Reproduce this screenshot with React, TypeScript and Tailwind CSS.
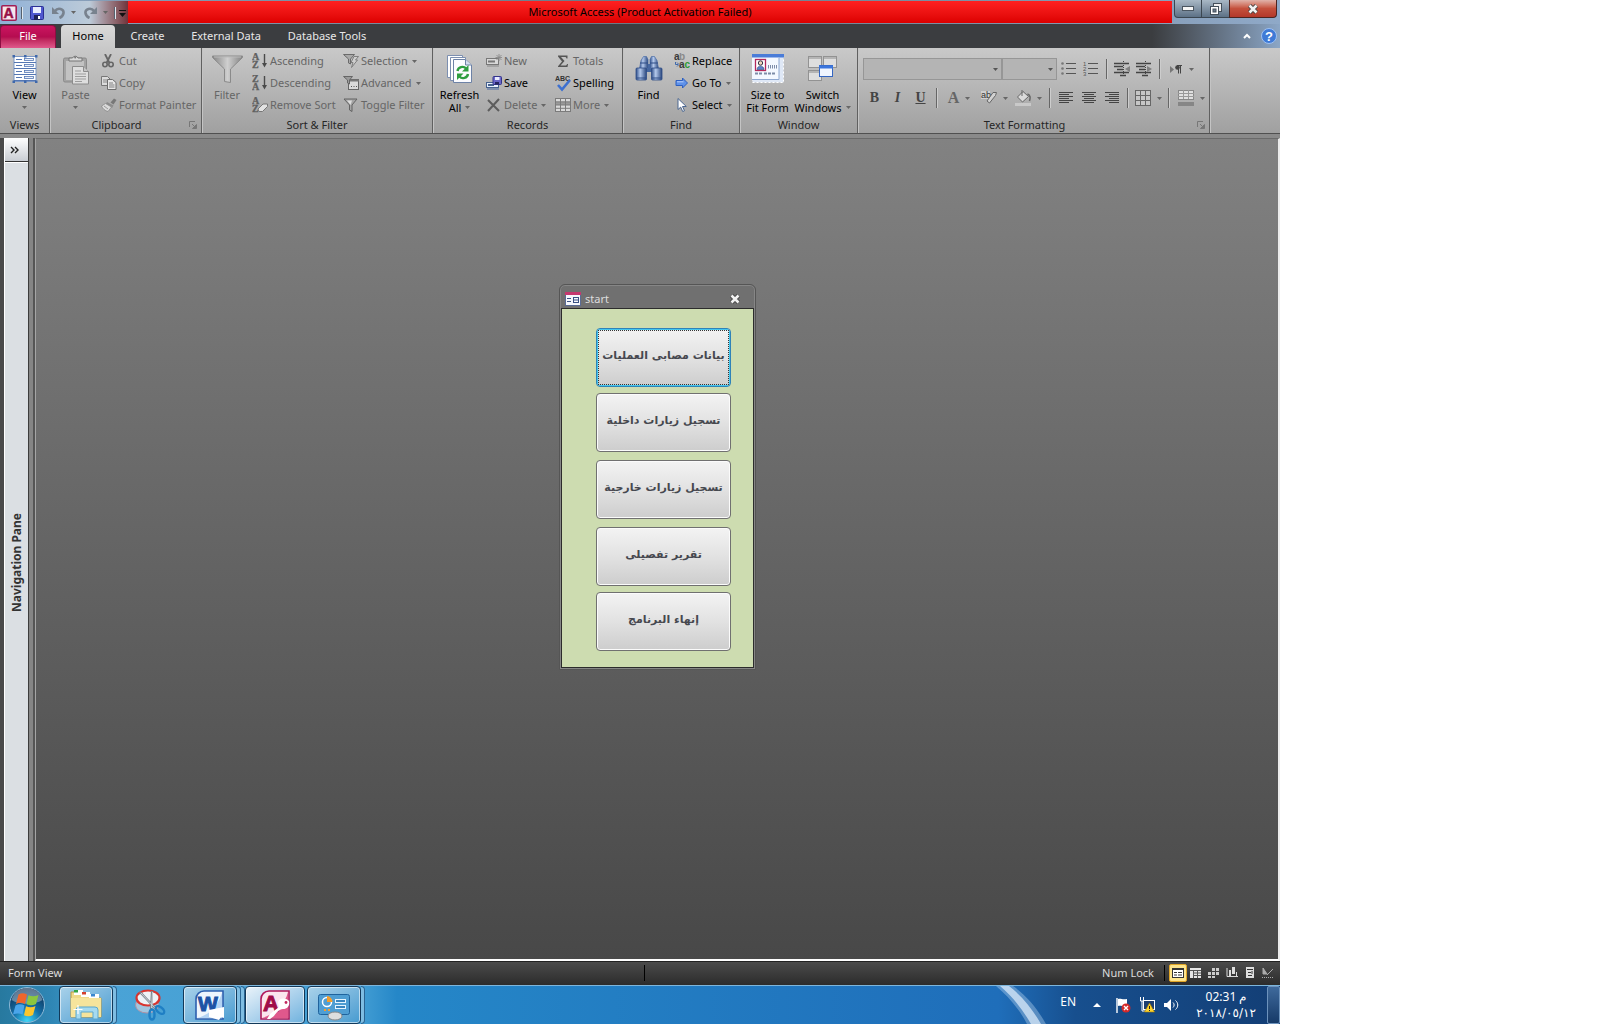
import React from "react";

type P = { children?: React.ReactNode };

const Caret = ({ c = "#666" }: { c?: string }) => (
  <svg width="5" height="3" viewBox="0 0 5 3" className="shrink-0" aria-hidden="true">
    <path d="M0 0h5L2.5 3z" fill={c} />
  </svg>
);

function Icon({ w = 16, h = 16, children }: P & { w?: number; h?: number }) {
  return (
    <svg width={w} height={h} viewBox={`0 0 ${w} ${h}`} className="shrink-0" aria-hidden="true">
      {children}
    </svg>
  );
}

/* ---------- ribbon icons ---------- */

const ViewIcon = () => (
  <Icon w={26} h={28}>
    <rect x="2" y="1.5" width="22" height="25" fill="#fff" stroke="#7b97c5" />
    {[2, 8, 14, 20].map((y) => (
      <g key={y}>
        <path d={`M2 ${y + 5.5}h22`} stroke="#5577b3" />
        <path d={`M4 ${y + 2.5}h6`} stroke="#5577b3" />
        <rect x="12.5" y={y + 1.5} width="9" height="2" fill="#e8eef8" stroke="#5577b3" strokeWidth=".8" />
      </g>
    ))}
    {[0.5, 12, 23].map((x) => (
      <g key={x} fill="#3f68ab">
        <rect x={x} y="0" width="2.5" height="2.5" />
        <rect x={x} y="25.5" width="2.5" height="2.5" />
      </g>
    ))}
  </Icon>
);

const PasteIcon = () => (
  <Icon w={28} h={31}>
    <rect x="1.5" y="4" width="23" height="24" rx="1.5" fill="#a3a3a3" stroke="#8a8a8a" />
    <rect x="4" y="7" width="18" height="19" fill="#c2c2c2" />
    <path d="M7 7V4h3.500a3 3 0 0 1 5.500 0H20v3z" fill="#d8d8d8" stroke="#777" />
    <circle cx="13.200" cy="3.500" r="1" fill="#777" />
    <path d="M10.500 12.500h11l5 5v12.500h-16z" fill="#dedede" stroke="#8c8c8c" />
    <path d="M21.500 12.500v5h5" fill="#c4c4c4" stroke="#8c8c8c" />
    <path d="M13 17h6M13 20h11M13 22.500h11M13 25h11M13 27.500h7" stroke="#9d9d9d" />
  </Icon>
);

const CutIcon = () => (
  <Icon w={14} h={14}>
    <path d="M4 0l4.500 9M10 0L5.500 9" stroke="#666" strokeWidth="1.800" />
    <circle cx="4" cy="10.500" r="2.200" fill="none" stroke="#666" strokeWidth="1.600" />
    <circle cx="10" cy="10.500" r="2.200" fill="none" stroke="#666" strokeWidth="1.600" />
  </Icon>
);

const CopyIcon = () => (
  <Icon w={16} h={14}>
    <path d="M.5.500h6l3 3v6h-9z" fill="#dcdcdc" stroke="#777" />
    <path d="M2 4h4M2 6h4" stroke="#888" />
    <path d="M6.500 3.500h5l3.500 3v7H6.500z" fill="#e6e6e6" stroke="#6d6d6d" />
    <path d="M8 7h4M8 9h5.500M8 11h5.500" stroke="#808080" />
  </Icon>
);

const PainterIcon = () => (
  <Icon w={16} h={14}>
    <path d="M9.500 4.500L13 .5l2.500 1.500-3 4.500z" fill="#777" />
    <path d="M6 4l6.500 3.500-1.500 2.500-6.500-3.500z" fill="#8b8b8b" />
    <path d="M4.500 5.500l6 3.500-3.500 4.500C4 13 1.500 10.500.500 8z" fill="#dadada" stroke="#8a8a8a" strokeWidth=".8" />
    <path d="M3 8l4 3" stroke="#999" />
  </Icon>
);

const FilterIcon = () => (
  <Icon w={31} h={28}>
    <defs>
      <linearGradient id="funnel" x1="0" x2="1">
        <stop offset="0" stopColor="#858585" />
        <stop offset=".5" stopColor="#cfcfcf" />
        <stop offset="1" stopColor="#858585" />
      </linearGradient>
    </defs>
    <path d="M.5 1h30v1.500L18.500 14v13.500l-6-1V14L.500 2.500z" fill="url(#funnel)" stroke="#8a8a8a" />
    <path d="M2 2h27" stroke="#bbb" />
  </Icon>
);

const SortLetters = ({ a, b }: { a: string; b: string }) => (
  <g fill="#606060" stroke="#606060" strokeWidth=".3" fontFamily="Liberation Serif, serif" fontWeight="700" fontSize="10">
    <text x="0" y="7">{a}</text>
    <text x="0" y="15">{b}</text>
  </g>
);
const SortIcon = ({ a, b }: { a: string; b: string }) => (
  <Icon>
    <SortLetters a={a} b={b} />
    <path d="M12.500 1v10" stroke="#4a4a4a" strokeWidth="1.400" />
    <path d="M10 10h5l-2.500 4.500z" fill="#4a4a4a" />
  </Icon>
);
const RemoveSortIcon = () => (
  <Icon>
    <SortLetters a="A" b="Z" />
    <path d="M6 12l5-5 4.500 0v2.500l-5 5H7z" fill="#e2e2e2" stroke="#777" />
  </Icon>
);
const SmallFunnel = () => (
  <Icon>
    <path d="M1 2h13L9 8v6.500L6.500 13V8z" fill="#a4a4a4" stroke="#636363" />
    <path d="M4 3.500h5L7.500 8z" fill="#ddd" />
  </Icon>
);
const SelectionIcon = () => (
  <Icon>
    <path d="M.5 1.500h11L7.500 6v5l-2-1V6z" fill="#a9a9a9" stroke="#6a6a6a" />
    <path d="M11 3.500h4.500l-3 3.500h2l-6 7.500 1.500-5H8z" fill="#cfcfcf" stroke="#777" strokeWidth=".9" />
  </Icon>
);
const AdvancedIcon = () => (
  <Icon>
    <rect x="5.500" y="4.500" width="10" height="10" fill="#dadada" stroke="#666" />
    <path d="M5 5.500h11" stroke="#777" strokeWidth="2" />
    <path d="M.5 1.500h9L6.500 5v4l-2-1V5z" fill="#9b9b9b" stroke="#666" />
    <path d="M8 11.500h1M10.500 11.500h1M13 11.500h1" stroke="#555" />
  </Icon>
);

const RefreshIcon = () => (
  <Icon w={28} h={30}>
    <path d="M1.500 1.500h15v22h-15z" fill="#fff" stroke="#7c8fb0" />
    <path d="M4.500 3.500h15v23h-15z" fill="#fff" stroke="#7c8fb0" />
    <path d="M7.500 5.500h12l6 5.500v17.500h-18z" fill="#fbfcff" stroke="#6d82a6" />
    <path d="M19.500 5.500V11h6" fill="#d5dff0" stroke="#6d82a6" />
    <path d="M11.500 17c.5-4 6-5.500 8.500-2.500" fill="none" stroke="#2f9e41" strokeWidth="2.400" />
    <path d="M22.500 11v6.500H16z" fill="#2f9e41" />
    <path d="M22 20c-.5 4-6 5.500-8.500 2.500" fill="none" stroke="#2f9e41" strokeWidth="2.400" />
    <path d="M11 26v-6.500h6.500z" fill="#2f9e41" />
  </Icon>
);
const NewIcon = () => (
  <Icon>
    <rect x=".5" y="5.500" width="12" height="6" fill="#d8d8d8" stroke="#777" />
    <path d="M2 8.500h7" stroke="#777" strokeWidth="2" />
    <path d="M1 13h12" stroke="#888" />
    <path d="M13 1v7M9.500 4.500h6.500M10.500 2l5 5M15.500 2l-5 5" stroke="#8b8b8b" strokeWidth=".9" />
  </Icon>
);
const SaveRecIcon = () => (
  <Icon>
    <rect x=".5" y="7.500" width="12" height="5" fill="#e8effc" stroke="#46628f" />
    <path d="M2 10h6" stroke="#46628f" strokeWidth="2" />
    <path d="M1 14h12" stroke="#4a69a3" />
    <rect x="7" y="1.500" width="8.500" height="8" rx="1" fill="#6b67c9" stroke="#34348a" />
    <rect x="9" y="2" width="4.500" height="3" fill="#e9ebff" />
    <rect x="9" y="7" width="4" height="2.500" fill="#25255f" />
  </Icon>
);
const DeleteIcon = () => (
  <Icon>
    <path d="M2 3l11 11M13 2L2 14" stroke="#5d5d5d" strokeWidth="2" fill="none" />
  </Icon>
);
const SigmaIcon = () => (
  <Icon>
    <path d="M3 2.500h9.500v3h-1c-.3-1.200-.8-1.500-2-1.500H6l3.500 4L5.500 12.500h4.500c1.200 0 1.700-.5 2-1.500h1l-.5 3H3v-.8L7 8.500 3 3.500z" fill="#555" />
  </Icon>
);
const SpellIcon = () => (
  <Icon w={16} h={17}>
    <text x="0" y="6" fontFamily="Liberation Sans, sans-serif" fontWeight="700" fontSize="7" fill="#333">ABC</text>
    <path d="M3 10l4 4.500L15 5" fill="none" stroke="#3d70d0" strokeWidth="2.600" />
  </Icon>
);
const MoreIcon = () => (
  <Icon>
    <rect x=".5" y="1.500" width="15" height="13" fill="#d9d9d9" stroke="#7b7b7b" />
    <rect x="1" y="5" width="14" height="3" fill="#999" />
    <path d="M0 4.800h16M0 8h16M0 11.300h16M5.500 1v14M10.500 1v14" stroke="#7b7b7b" />
  </Icon>
);

const FindIcon = () => (
  <Icon w={28} h={28}>
    <defs>
      <linearGradient id="barrel" x1="0" x2="1">
        <stop offset="0" stopColor="#2f4f8a" />
        <stop offset=".4" stopColor="#b4c9ec" />
        <stop offset="1" stopColor="#29467d" />
      </linearGradient>
    </defs>
    <rect x="11" y="9" width="6" height="8" fill="#45669f" />
    <path d="M8.500 1.500h3l1.500 3v9H4.500l1.500-8z" fill="url(#barrel)" stroke="#4b6da8" strokeWidth=".7" />
    <path d="M16.500 1.500h3l2.500 4 1.500 8H15v-9z" fill="url(#barrel)" stroke="#4b6da8" strokeWidth=".7" />
    <rect x="1" y="13" width="10.500" height="12" rx="1" fill="url(#barrel)" stroke="#2f4d86" strokeWidth=".8" />
    <rect x="16.500" y="13" width="10.500" height="12" rx="1" fill="url(#barrel)" stroke="#2f4d86" strokeWidth=".8" />
    <path d="M1.500 23h9.500M17 23h9.500M5 8h8M15 8h8" stroke="#2f4d86" />
  </Icon>
);
const ReplaceIcon = () => (
  <Icon>
    <g fontFamily="Liberation Sans, sans-serif" fontWeight="700" fontSize="10">
      <text x="0" y="7" fill="#3a3a3a">a</text>
      <text x="5" y="7" fill="#8a8a8a">b</text>
      <text x="5" y="15" fill="#3a3a3a">a</text>
      <text x="10.500" y="15" fill="#2c9b32">c</text>
    </g>
    <path d="M1.500 9v2.500H4M3 9.500l2 2-2 2" fill="none" stroke="#3f68ab" />
  </Icon>
);
const GoIcon = () => (
  <Icon>
    <path d="M2 5.500h6.500V3l5 5-5 5v-2.500H2z" fill="#5f92ea" stroke="#2d5fc0" />
    <path d="M3 6.800h6.500" stroke="#b9d1fb" />
  </Icon>
);
const CursorIcon = () => (
  <Icon>
    <path d="M4 1.500v11l2.700-2.400 2 4.400 1.800-.8-2-4.200h3.800z" fill="#fff" stroke="#4a6690" />
  </Icon>
);
const SizeIcon = () => (
  <Icon w={32} h={30}>
    <rect x=".5" y=".5" width="31" height="28" fill="#dfe8f6" stroke="#fff" strokeDasharray="2 2" />
    <rect x="0" y="0" width="27" height="25" fill="#f4f8ff" />
    <rect x="0" y="0" width="32" height="3.500" fill="#4a7cd8" />
    <rect x="3.500" y="5.500" width="10" height="11" fill="#fff" stroke="#b3285b" strokeWidth="1.300" />
    <circle cx="8.500" cy="9" r="2.200" fill="#f0d4bc" stroke="#334" />
    <path d="M5 15.500c0-4.500 7-4.500 7 0z" fill="#5b82c9" stroke="#334a7a" strokeWidth=".6" />
    <path d="M16.500 11v3.500M18.500 11v3.500M20.500 11v3.500M22.500 11v3.500M24.500 11v3.500" stroke="#7d8ca8" />
    <path d="M3 19.500h7M12 19.500h12" stroke="#7d8ca8" strokeWidth="2" strokeDasharray="3 1" />
    <path d="M27 4v21.500H0" fill="none" stroke="#8fa8d0" />
  </Icon>
);
const SwitchIcon = () => (
  <Icon w={30} h={28}>
    <g fill="#dedede" stroke="#929292">
      <rect x=".5" y="1.500" width="13" height="11" />
      <rect x="15.500" y="1.500" width="13" height="11" />
      <rect x=".5" y="15.500" width="13" height="10" />
    </g>
    <path d="M1 3h12M16 3h12M1 17h12" stroke="#b5b5b5" strokeWidth="2" />
    <rect x="11.500" y="10.500" width="13" height="11" fill="#f1f6ff" stroke="#3566c1" />
    <path d="M11 12h14" stroke="#3c76dd" strokeWidth="3" />
  </Icon>
);

const ListIcon = ({ numbered = false }: { numbered?: boolean }) => (
  <Icon>
    {[3, 8, 13].map((y, i) => (
      <g key={y}>
        <path d={`M5 ${y - 0.5}h10`} stroke="#555" />
        {numbered ? (
          <text x="0" y={y + 2} fontSize="6" fontFamily="Liberation Sans, sans-serif" fill="#555">{i + 1}</text>
        ) : (
          <circle cx="1.500" cy={y - 0.5} r="1.300" fill="#777" />
        )}
      </g>
    ))}
  </Icon>
);
const IndentIcon = ({ out = false }: { out?: boolean }) => (
  <Icon>
    <path d="M0 2.500h15M0 5.500h9M3 8.500h6M0 11.500h15M6 14.500h6" stroke="#444" strokeWidth="1.300" />
    <path d="M9.500 0v16" stroke="#444" strokeDasharray="1 1" />
    <path d={out ? "M16 5v6l-5-3z" : "M11 5v6l5-3z"} fill="#808080" />
  </Icon>
);
const ParaIcon = () => (
  <Icon w={14}>
    <path d="M1 5v7l4-3.500z" fill="#777" />
    <path d="M9.500 4.500v8M11.500 4.500v8M8 4.500h5" stroke="#444" />
    <circle cx="8.500" cy="6.500" r="2.300" fill="#444" />
  </Icon>
);
const AlignIcon = ({ k }: { k: "l" | "c" | "r" }) => {
  const x = k === "l" ? 0 : k === "c" ? 2 : 4;
  return (
    <Icon w={14} h={12}>
      <path d={`M0 .5h14M${x} 2.500h10M0 4.500h14M${x} 6.500h10M0 8.500h14M${x} 10.500h10`} stroke="#444" />
    </Icon>
  );
};
const GridIcon = () => (
  <Icon>
    <rect x=".5" y=".5" width="15" height="15" fill="#c6c6c6" stroke="#666" />
    <path d="M5.500 0v16M10.500 0v16M0 5.500h16M0 10.500h16" stroke="#666" />
  </Icon>
);
const AltIcon = () => (
  <Icon>
    <rect x=".5" y=".5" width="15" height="9" fill="#e0e0e0" stroke="#888" />
    <path d="M5.500 0v9M10.500 0v9M0 3.500h16M0 6.500h16" stroke="#999" />
    <rect x="0" y="12" width="16" height="4" fill="#868686" />
  </Icon>
);
const HighlightIcon = () => (
  <Icon>
    <rect x="0" y="1" width="9" height="8" fill="#cfcfcf" />
    <text x="0" y="8" fontSize="9" fontFamily="Liberation Sans, sans-serif" fill="#333">ab</text>
    <path d="M6 11l6-8.500 3.500 0-1 3L8.500 13z" fill="#d2d2d2" stroke="#666" />
  </Icon>
);
const BucketIcon = () => (
  <Icon>
    <path d="M2.500 7L8 1.500l5.500 5-6 5.500z" fill="#dadada" stroke="#666" />
    <path d="M7 0v6" stroke="#666" />
    <path d="M12.500 4c3 1 3 4 2 7" stroke="#666" strokeWidth="1.500" fill="none" />
    <rect x="0" y="13" width="16" height="3" fill="#c9c9c9" />
  </Icon>
);
const Launcher = () => (
  <Icon w={8} h={8}>
    <path d="M.5 6V.5H6" fill="none" stroke="#777" />
    <path d="M3 3l3 3M7.500 3.500v4h-4z" stroke="#777" fill="#777" />
  </Icon>
);

/* ---------- ribbon layout ---------- */

function Group({ label, width, launcher, children }: P & { label: string; width: string; launcher?: boolean }) {
  return (
    <section
      aria-label={label}
      className={`${width} flex shrink-0 flex-col border-r border-[#606060] pt-0.5 shadow-[1px_0_0_#c4c4c4]`}
    >
      <div className="flex h-[67px]">{children}</div>
      <div className="flex items-center leading-4 text-[#262626]">
        <span className="flex-1 text-center">{label}</span>
        {launcher && (
          <button aria-label={`${label} options`} className="w-[18px] pl-1.5">
            <Launcher />
          </button>
        )}
      </div>
    </section>
  );
}

function Big({ icon, l1, l2, caret, dim, width }: { icon: React.ReactNode; l1: string; l2?: string; caret?: boolean; dim?: boolean; width: string }) {
  return (
    <button
      className={`${width} flex shrink-0 flex-col items-center whitespace-nowrap leading-[13px] ${dim ? "text-[#666]" : "text-black"}`}
    >
      <span className="flex h-[38px] items-center">{icon}</span>
      <span>{l1}</span>
      <span className="flex h-[13px] items-center gap-1">
        {l2}
        {caret && <Caret />}
      </span>
    </button>
  );
}

function Small({ icon, label, caret, dim }: { icon: React.ReactNode; label: string; caret?: boolean; dim?: boolean }) {
  return (
    <button className={`flex h-[22px] items-center whitespace-nowrap ${dim ? "text-[#666]" : "text-black"}`}>
      <span className="flex w-[18px] justify-start">{icon}</span>
      <span>{label}</span>
      {caret && (
        <span className="pl-1">
          <Caret />
        </span>
      )}
    </button>
  );
}

const Col = ({ width, children }: P & { width: string }) => (
  <div className={`${width} flex shrink-0 flex-col items-start`}>{children}</div>
);

const Sep = () => (
  <span className="px-1">
    <span className="block h-5 w-px bg-[#666] shadow-[1px_0_0_#cdcdcd]" />
  </span>
);

const Tool = ({ label, width, caret, children }: P & { label: string; width: string; caret?: boolean }) => (
  <button aria-label={label} className={`${width} flex h-5 shrink-0 items-center justify-center ${caret ? "gap-1.5" : ""}`}>
    {children}
    {caret && <Caret />}
  </button>
);

function Combo({ label, width }: { label: string; width: string }) {
  return (
    <div className={`${width} relative h-[22px]`}>
      <select aria-label={label} className="h-full w-full appearance-none border border-[#969696] bg-[#b4b4b4]">
        <option></option>
      </select>
      <span className="pointer-events-none absolute inset-y-0 right-1 flex items-center">
        <Caret c="#555" />
      </span>
    </div>
  );
}

function Ribbon() {
  return (
    <div className="flex h-[86px] border-b border-[#505050] bg-linear-to-b from-[#c9c9c9] to-[#a0a0a0]">
      <Group label="Views" width="w-[50px]">
        <Big icon={<ViewIcon />} l1="View" caret width="w-[49px]" />
      </Group>
      <Group label="Clipboard" width="w-[152px]" launcher>
        <Big icon={<PasteIcon />} l1="Paste" caret dim width="w-[51px]" />
        <Col width="w-[98px]">
          <Small icon={<CutIcon />} label="Cut" dim />
          <Small icon={<CopyIcon />} label="Copy" dim />
          <Small icon={<PainterIcon />} label="Format Painter" dim />
        </Col>
      </Group>
      <Group label="Sort & Filter" width="w-[231px]">
        <Big icon={<FilterIcon />} l1="Filter" dim width="w-[50px]" />
        <Col width="w-[91px]">
          <Small icon={<SortIcon a="A" b="Z" />} label="Ascending" dim />
          <Small icon={<SortIcon a="Z" b="A" />} label="Descending" dim />
          <Small icon={<RemoveSortIcon />} label="Remove Sort" dim />
        </Col>
        <Col width="w-[88px]">
          <Small icon={<SelectionIcon />} label="Selection" caret dim />
          <Small icon={<AdvancedIcon />} label="Advanced" caret dim />
          <Small icon={<SmallFunnel />} label="Toggle Filter" dim />
        </Col>
      </Group>
      <Group label="Records" width="w-[190px]">
        <Big icon={<RefreshIcon />} l1="Refresh" l2="All" caret width="w-[53px]" />
        <Col width="w-[69px]">
          <Small icon={<NewIcon />} label="New" dim />
          <Small icon={<SaveRecIcon />} label="Save" />
          <Small icon={<DeleteIcon />} label="Delete" caret dim />
        </Col>
        <Col width="w-[66px]">
          <Small icon={<SigmaIcon />} label="Totals" dim />
          <Small icon={<SpellIcon />} label="Spelling" />
          <Small icon={<MoreIcon />} label="More" caret dim />
        </Col>
      </Group>
      <Group label="Find" width="w-[117px]">
        <Big icon={<FindIcon />} l1="Find" width="w-[51px]" />
        <Col width="w-[64px]">
          <Small icon={<ReplaceIcon />} label="Replace" />
          <Small icon={<GoIcon />} label="Go To" caret />
          <Small icon={<CursorIcon />} label="Select" caret />
        </Col>
      </Group>
      <Group label="Window" width="w-[118px]">
        <Big icon={<SizeIcon />} l1="Size to" l2="Fit Form" width="w-[55px]" />
        <Big icon={<SwitchIcon />} l1="Switch" l2="Windows" caret width="w-[55px]" />
      </Group>
      <Group label="Text Formatting" width="w-[352px]" launcher>
        <div className="flex flex-col gap-2 pl-[5px] pt-2">
          <div className="flex h-[22px] items-center">
            <Combo label="Font" width="w-[139px]" />
            <Combo label="Font size" width="w-[55px]" />
            <Tool label="Bullets" width="w-[23px]"><ListIcon /></Tool>
            <Tool label="Numbering" width="w-[22px]"><ListIcon numbered /></Tool>
            <Sep />
            <Tool label="Decrease indent" width="w-[22px]"><IndentIcon out /></Tool>
            <Tool label="Increase indent" width="w-[22px]"><IndentIcon /></Tool>
            <Sep />
            <Tool label="Text direction" width="w-[34px]" caret><ParaIcon /></Tool>
          </div>
          <div className="flex h-5 items-center font-['Liberation_Serif',serif] text-[#444]">
            <Tool label="Bold" width="w-[23px]"><b className="text-sm">B</b></Tool>
            <Tool label="Italic" width="w-[23px]"><b className="text-sm italic">I</b></Tool>
            <Tool label="Underline" width="w-[23px]"><b className="text-sm underline">U</b></Tool>
            <Sep />
            <Tool label="Font color" width="w-[36px]" caret><b className="text-base text-[#666]">A</b></Tool>
            <Tool label="Highlight" width="w-[34px]" caret><HighlightIcon /></Tool>
            <Tool label="Background color" width="w-[34px]" caret><BucketIcon /></Tool>
            <Sep />
            <Tool label="Align left" width="w-[23px]"><AlignIcon k="l" /></Tool>
            <Tool label="Center" width="w-[23px]"><AlignIcon k="c" /></Tool>
            <Tool label="Align right" width="w-[23px]"><AlignIcon k="r" /></Tool>
            <Sep />
            <Tool label="Gridlines" width="w-[32px]" caret><GridIcon /></Tool>
            <Sep />
            <Tool label="Alternate row color" width="w-[36px]" caret><AltIcon /></Tool>
          </div>
        </div>
      </Group>
    </div>
  );
}

/* ---------- title bar and tabs ---------- */

const XMark = () => (
  <Icon w={12} h={10}>
    <path d="M2.500 1.500l7 7M9.500 1.500l-7 7" stroke="#444" strokeWidth="4.400" />
    <path d="M2.500 1.500l7 7M9.500 1.500l-7 7" stroke="#f2f2f2" strokeWidth="2.600" />
  </Icon>
);

function TitleBar() {
  return (
    <header className="flex h-6 bg-linear-to-r from-[#8ba5c2] via-[#6c7783] to-[#8fa9c8] pt-px">
      <div className="flex h-full w-[128px] shrink-0 items-center bg-linear-to-r from-[#8fb0d6] via-[#bccbd9] via-70% to-[#70343c] pl-px">
        <Icon w={16} h={18}>
          <rect x=".8" y="1.800" width="14.400" height="14.400" rx="1" fill="#f7e6ed" stroke="#a01e55" strokeWidth="1.600" />
          <text x="2.500" y="14" fontSize="14" fontWeight="700" fontFamily="Liberation Sans, sans-serif" fill="#960f46" stroke="#960f46" strokeWidth=".5">A</text>
        </Icon>
        <span className="ml-1 h-3 w-px bg-[#56616e] shadow-[1px_0_0_#dfe8f0]" />
        <button aria-label="Save" className="pl-2">
          <Icon w={14} h={14}>
            <rect x=".5" y=".5" width="13" height="13" rx="1" fill="#4f58cf" stroke="#2b2f94" />
            <rect x="3" y="1" width="8" height="6" fill="#e9edff" />
            <rect x="4" y="9" width="6" height="5" fill="#1f2258" />
            <rect x="8" y="10" width="2" height="3" fill="#fff" />
          </Icon>
        </button>
        <button aria-label="Undo" className="flex items-center gap-1.5 pl-2">
          <Icon w={13} h={13}>
            <path d="M3 5c3-4 9-2 8.500 2-.3 2.500-2 4-4 5" fill="none" stroke="#78828e" strokeWidth="2.600" />
            <path d="M0 1v7h7z" fill="#78828e" />
          </Icon>
          <Caret />
        </button>
        <button aria-label="Redo" className="flex items-center gap-1.5 pl-2">
          <Icon w={13} h={13}>
            <path d="M10 5C7 1 1 3 1.500 7c.3 2.500 2 4 4 5" fill="none" stroke="#78828e" strokeWidth="2.600" />
            <path d="M13 1v7H6z" fill="#78828e" />
          </Icon>
          <Caret />
        </button>
        <span className="ml-1.5 mr-1 h-3 w-px bg-[#56616e] shadow-[1px_0_0_#dfe8f0]" />
        <button aria-label="Customize toolbar">
          <Icon w={7} h={8}>
            <path d="M0 1.500h7" stroke="#111" />
            <path d="M0 4h7L3.500 8z" fill="#111" />
          </Icon>
        </button>
      </div>
      <h1 className="h-[22px] min-w-0 flex-1 truncate bg-linear-to-b from-[#ff2020] to-[#dc0000] pr-5 text-center leading-[22px] text-black">
        Microsoft Access (Product Activation Failed)
      </h1>
      <div className="-mt-px flex h-[18px] w-[108px] shrink-0 pl-0.5 pr-[3px]">
        <button aria-label="Minimize" className="flex w-7 items-center justify-center rounded-bl border border-t-0 border-[#3b4650] bg-linear-to-b from-[#a9b8c5] to-[#5d7186]">
          <Icon w={12} h={5}><rect x=".5" y=".5" width="11" height="4" fill="#f5f5f5" stroke="#4a5560" /></Icon>
        </button>
        <button aria-label="Restore" className="flex w-[27px] items-center justify-center border-b border-[#3b4650] bg-linear-to-b from-[#a9b8c5] to-[#5d7186]">
          <Icon w={12} h={12}>
            <rect x="3.500" y=".5" width="8" height="8" fill="#eee" stroke="#444f5a" />
            <rect x=".5" y="3.500" width="8" height="8" fill="#fff" stroke="#444f5a" />
            <rect x="3" y="6" width="3" height="3" fill="#6d7d8d" stroke="#444f5a" />
          </Icon>
        </button>
        <button aria-label="Close" className="flex flex-1 items-center justify-center rounded-br border border-t-0 border-[#4d2420] bg-linear-to-b from-[#e0b3aa] via-[#c4503c] to-[#b3382a]">
          <XMark />
        </button>
      </div>
    </header>
  );
}

function Tabs() {
  const tab = "h-[23px] pb-0.5";
  return (
    <nav className="flex h-6 items-end bg-linear-to-r from-[#3b3d40] from-90% to-[#8ba6c6] text-[#e8e8e8]">
      <button className={`${tab} w-[56px] rounded-t-sm border border-b-0 border-[#8c0f42] bg-linear-to-b from-[#cb1560] via-[#b50c50] to-[#e0588c] text-white`}>File</button>
      <button className={`${tab} ml-[5px] w-[54px] rounded-t-sm bg-linear-to-b from-[#d9d9d9] to-[#c9c9c9] text-black`}>Home</button>
      <button className={`${tab} w-[65px]`}>Create</button>
      <button className={`${tab} w-[92px]`}>External Data</button>
      <button className={`${tab} w-[110px]`}>Database Tools</button>
      <span className="flex-1" />
      <span className="flex h-full items-center gap-2.5 pr-[3px]">
        <button aria-label="Collapse ribbon">
          <Icon w={8} h={6}>
            <path d="M1 5l3-3 3 3" fill="none" stroke="#fff" strokeWidth="2" />
          </Icon>
        </button>
        <button aria-label="Help">
          <Icon>
            <circle cx="8" cy="8" r="7.500" fill="#3f7ad6" stroke="#9dc0f2" />
            <text x="4" y="12.500" fontSize="13" fontWeight="700" fontFamily="Liberation Sans, sans-serif" fill="#fff">?</text>
          </Icon>
        </button>
      </span>
    </nav>
  );
}

/* ---------- workspace ---------- */

function FormButton({ label, focused }: { label: string; focused?: boolean }) {
  return (
    <button
      dir="rtl"
      className={`h-[59px] w-[135px] rounded-sm border bg-linear-to-b from-[#f3f3f3] via-[#e2e2e2] via-50% to-[#cdcdcd] p-px font-['DejaVu_Sans',sans-serif] text-[11px] font-bold text-[#46484f] ${
        focused ? "border-[#2f83b8] shadow-[inset_0_0_0_1px_#45c8ef]" : "border-[#707070] shadow-[inset_0_0_0_1px_#fbfbfb]"
      }`}
    >
      <span className={`flex h-full items-center justify-center whitespace-nowrap border border-dotted pb-1 ${focused ? "border-[#333]" : "border-transparent"}`}>
        {label}
      </span>
    </button>
  );
}

function StartWindow() {
  return (
    <div role="dialog" aria-label="start" className="absolute left-[523px] top-[145px] w-[197px] rounded-t-md border border-[#555] bg-[#707070] p-px shadow-[inset_0_0_0_1px_#868686]">
      <div className="flex h-[22px] items-center pl-1 pr-[13px] pt-1 text-[#ddd]">
        <Icon w={16} h={14}>
          <rect x=".5" y=".5" width="15" height="13" fill="#f6f8fd" stroke="#5a6b94" />
          <rect x="0" y="0" width="16" height="3" fill="#c5386f" />
          <path d="M2 6.500h4M2 9.500h4" stroke="#3a5184" />
          <rect x="8.500" y="5.500" width="5" height="5" fill="none" stroke="#3a5184" />
          <path d="M9 8h4" stroke="#3a5184" />
        </Icon>
        <span className="flex-1 pl-1">start</span>
        <button aria-label="Close start">
          <XMark />
        </button>
      </div>
      <div className="flex flex-col gap-2 border border-[#2c2c2c] bg-[#cddcb0] pb-4 pl-[34px] pt-[19px]">
        <div className="flex flex-col gap-1.5">
          <FormButton label="بيانات مصابى العمليات" focused />
          <FormButton label="تسجيل زيارات داخلية" />
        </div>
        <FormButton label="تسجيل زيارات خارجية" />
        <div className="flex flex-col gap-1.5">
          <FormButton label="تقرير تفصيلى" />
          <FormButton label="إنهاء البرنامج" />
        </div>
      </div>
    </div>
  );
}

function Workspace() {
  return (
    <main className="flex min-h-0 flex-1 bg-linear-to-b from-[#8a8a8a] to-[#454545] pt-1">
      <aside className="flex w-[35px] shrink-0 border-r-2 border-[#555] bg-[#858585]">
        <div className="w-1 bg-[#4a4a4a]" />
        <div className="flex w-[25px] flex-col border-r border-[#3c3c3c] border-l border-l-white">
          <button aria-label="Open navigation pane" className="flex h-6 items-center justify-center border-b border-[#333] bg-linear-to-b from-white to-[#c9cdd3] pr-1">
            <Icon w={9} h={8}>
              <path d="M1 1l3 3-3 3M5 1l3 3-3 3" fill="none" stroke="#222" strokeWidth="1.400" />
            </Icon>
          </button>
          <div className="flex flex-1 items-center justify-center border-t border-white bg-[#dbdfe3]">
            <span className="rotate-180 text-xs font-bold text-[#333] [writing-mode:vertical-rl]">Navigation Pane</span>
          </div>
        </div>
      </aside>
      <div className="relative flex-1 border-b-2 border-l border-r-2 border-t border-b-white border-l-[#a5a5a5] border-r-[#ececec] border-t-[#6a6a6a] bg-linear-to-b from-[#828282] to-[#484848]">
        <StartWindow />
      </div>
    </main>
  );
}

/* ---------- status bar ---------- */

function StatusBar() {
  const b = "flex h-[18px] w-[18px] items-center justify-center";
  return (
    <div className="flex h-6 items-center border-t border-[#222] bg-linear-to-b from-[#4b4b4b] to-[#2c2c2c] pb-0.5 text-[#dcdcdc]">
      <span className="flex-1 pl-2">Form View</span>
      <span className="h-4 w-px bg-black" />
      <div className="flex flex-1 items-center justify-end">
        <span className="pr-2.5">Num Lock</span>
        <span className="h-4 w-px bg-black" />
        <span className="flex pl-1 pr-[3px]">
          <button aria-label="Form View" className={`${b} rounded-xs border border-[#e0a526] bg-[#fde48c]`}>
            <Icon w={12} h={10}>
              <rect x=".5" y=".5" width="11" height="9" fill="#fff" stroke="#333" />
              <path d="M0 1.500h12M2 4.500h3M2 7h3M6 4.500h4M6 7h4" stroke="#333" />
            </Icon>
          </button>
          <button aria-label="Datasheet View" className={b}>
            <Icon w={12} h={10}>
              <rect x="0" y="0" width="11" height="10" fill="#e6e6e6" />
              <path d="M0 2.500h11M3 5h8M3 7.500h8M3.500 2v8M7.500 3v7" stroke="#555" />
            </Icon>
          </button>
          <button aria-label="PivotTable View" className={b}>
            <Icon w={12} h={10}>
              <path d="M4 0h3v3H4zM8 0h3v3H8zM0 4h3v3H0zM4 4h3v3H4zM8 4h3v3H8zM0 8h3v2H0zM4 8h3v2H4z" fill="#ccc" />
            </Icon>
          </button>
          <button aria-label="PivotChart View" className={b}>
            <Icon w={12} h={11}>
              <path d="M1 1v8.500h11" fill="none" stroke="#ddd" />
              <path d="M3 3h2v6H3zM6 0h3v7H6zM10 5h1v5h-1z" fill="#ddd" />
            </Icon>
          </button>
          <button aria-label="Layout View" className={b}>
            <Icon w={10} h={11}>
              <rect x="1" y="0" width="8" height="11" fill="#ddd" />
              <path d="M2 2.500h6M3 5.500h3M7 4v3M3 8.500h4" stroke="#333" />
            </Icon>
          </button>
          <button aria-label="Design View" className={b}>
            <Icon w={12} h={10}>
              <path d="M1 0v6h4zM11 1L5 7" fill="#aaa" stroke="#aaa" />
              <path d="M0 9.500h11" stroke="#aaa" strokeDasharray="1 1" />
            </Icon>
          </button>
        </span>
      </div>
    </div>
  );
}

/* ---------- taskbar ---------- */

const TaskApp = ({ label, active, stack = 0, children }: P & { label: string; active?: boolean; stack?: number }) => (
  <div className="flex h-full">
    <button
      aria-label={label}
      className={`flex h-full items-center justify-center rounded-sm border border-[#12395a] shadow-[inset_0_0_0_1px_#ffffff90] ${
        active ? "w-[60px] bg-linear-to-br from-[#eaf3fa] to-[#6fb2de]" : "w-[54px] bg-linear-to-br from-[#a9d2ea] to-[#459bd0]"
      }`}
    >
      {children}
    </button>
    {Array.from({ length: stack }, (_, i) => (
      <span key={i} className="w-1 rounded-r-sm border border-l-0 border-[#2a6492] bg-[#7fbde2]" />
    ))}
  </div>
);

function Taskbar() {
  return (
    <footer className="flex h-[39px] items-stretch border-t border-[#7db6dc] bg-[linear-gradient(90deg,#27799f_0%,#2f86b5_4%,#4aa3d6_8%,#459fd4_28%,#2587c8_31%,#1f6eba_78%,#174f8e_84%,#133e75_100%)] text-white">
      <button aria-label="Start" className="flex w-[59px] items-center pl-2">
        <Icon w={38} h={38}>
          <defs>
            <radialGradient id="orb" cx=".5" cy=".95" r=".9">
              <stop offset="0" stopColor="#3fd6f7" />
              <stop offset=".45" stopColor="#1570a8" />
              <stop offset="1" stopColor="#0d2f55" />
            </radialGradient>
          </defs>
          <circle cx="19" cy="19" r="17.500" fill="url(#orb)" stroke="#8db9d6" />
          <path d="M3.500 14a16 16 0 0 1 31 0c-8 5-23 5-31 0z" fill="#fff" opacity=".35" />
          <path d="M10.500 8.500c3-1.800 5.500-1.600 8.500 0l-2 9.500c-3-1.500-6-1.600-9 0z" fill="#f0652b" />
          <path d="M20.500 9.200c3 1.600 6.500 1.500 10-.2l-2.500 9c-3 1.700-6.500 1.600-9.500.2z" fill="#8cc63e" />
          <path d="M7.500 19.500c3-1.600 6-1.500 9 0l-2 9c-3-1.500-6-1.500-9.500 0z" fill="#4aa5ea" />
          <path d="M18 20.300c3 1.500 6.500 1.400 9.500-.2l-2.500 9c-3 1.600-6.500 1.500-9 .1z" fill="#fcc62d" />
        </Icon>
      </button>
      <TaskApp label="Windows Explorer" stack={1}>
        <Icon w={34} h={32}>
          <path d="M2 3h9l2 3h9l2 3h8v19H2z" fill="#efd98a" stroke="#b89a45" />
          <path d="M5 1h9v5H5z" fill="#fff" /><path d="M5 1h4v2.500H5z" fill="#32a545" />
          <path d="M12 3h9v5h-9z" fill="#fff" /><path d="M13 3h4v2.500h-4z" fill="#d4402e" />
          <path d="M20 5h10v5H20z" fill="#fff" /><path d="M22 5h4v2.500h-4z" fill="#3a87cf" />
          <path d="M2 9h30v19H2z" fill="#f6e49c" />
          <path d="M7 30V21a3 3 0 0 1 3-3h16a3 3 0 0 1 3 3v9h-5v-7H12v7z" fill="#a5daf0" stroke="#5aa7cd" />
          <path d="M9 16v9M4.500 20.500h9" stroke="#fff" strokeWidth="1.200" />
        </Icon>
      </TaskApp>
      <button aria-label="Snipping Tool" className="flex w-[66px] items-center justify-center">
        <Icon w={32} h={34}>
          <ellipse cx="13" cy="17" rx="11.500" ry="8" fill="#b7cfe2" stroke="#c98d98" opacity=".8" />
          <ellipse cx="14" cy="10" rx="11.500" ry="7.500" fill="#eef3f7" stroke="#d8352f" strokeWidth="2.200" />
          <path d="M6 4l16 17M18 3l-1 19" stroke="#7a838c" strokeWidth="2.200" />
          <path d="M7 5l14 15M18.500 4l-1 16" stroke="#dfe5ea" strokeWidth=".8" />
          <ellipse cx="18" cy="26.500" rx="2.500" ry="5" fill="none" stroke="#1f7fc4" strokeWidth="2.400" />
          <ellipse cx="26" cy="22" rx="5" ry="2.800" transform="rotate(40 26 22)" fill="none" stroke="#1f7fc4" strokeWidth="2.400" />
        </Icon>
      </button>
      <TaskApp label="Microsoft Word" stack={2}>
        <Icon w={32} h={32}>
          <path d="M10 2h19v28H2V10a8 8 0 0 1 8-8z" fill="#eef5fd" stroke="#2c5fae" strokeWidth="1.600" />
          <path d="M3 29c10-2 20-10 25-25v25z" fill="#b4d3f3" />
          <text x="4" y="22" fontSize="21" fontWeight="700" fontFamily="Liberation Sans, sans-serif" fill="#1c52a5" stroke="#1c52a5">W</text>
          <path d="M15 21l15-3v11l-3-1-2 3-10-3z" fill="#fff" />
        </Icon>
      </TaskApp>
      <TaskApp label="Microsoft Access" active>
        <Icon w={32} h={32}>
          <path d="M10 2h20v28H2V10a8 8 0 0 1 8-8z" fill="#fbe6ee" stroke="#b0195a" strokeWidth="1.600" />
          <path d="M3 29C14 26 26 16 29 3v26z" fill="#e0588c" />
          <text x="4" y="22" fontSize="22" fontWeight="700" fontFamily="Liberation Sans, sans-serif" fill="#a00d48" stroke="#a00d48">A</text>
          <path d="M19 13a6 5 0 0 1 11-1c1 4-1 8-6 8-4 0-7 4-9 7l-4 3h-3l3-5 9-7z" fill="#fff" />
          <circle cx="27" cy="13.500" r="1.400" fill="#c2285f" />
        </Icon>
      </TaskApp>
      <span className="w-0.5" />
      <TaskApp label="Control Panel" stack={1}>
        <Icon w={34} h={32}>
          <rect x="1.500" y="5.500" width="31" height="20" rx="2" fill="#4f9ed3" stroke="#1f639d" />
          <circle cx="10" cy="13" r="4.500" fill="none" stroke="#fff" strokeWidth="1.500" />
          <path d="M10 13V7a6 6 0 0 1 5.500 6z" fill="#f59d2a" />
          <rect x="18.500" y="10.500" width="10" height="3" fill="#3a86c0" stroke="#e5f5ff" />
          <rect x="18.500" y="16.500" width="10" height="3" fill="#3a86c0" stroke="#e5f5ff" />
          <path d="M7 21h2M11 21h2" stroke="#f59d2a" strokeWidth="2" />
          <ellipse cx="18" cy="27" rx="7" ry="4" fill="#dedede" stroke="#888" />
        </Icon>
      </TaskApp>
      <div className="relative min-w-0 flex-1 overflow-hidden">
        <svg className="absolute right-0 top-0 h-full w-16" viewBox="0 0 64 38" preserveAspectRatio="none" aria-hidden="true">
          <path d="M0 0h17c14 10 24 22 33 38H31C24 24 12 10 0 0z" fill="#cfe5fa" opacity=".35" />
          <path d="M4 0h9c14 11 24 24 32 38H35C27 24 16 10 4 0z" fill="#e3f0fc" opacity=".7" />
        </svg>
      </div>
      <div className="flex items-center">
        <span className="pb-1.5 pr-[17px] text-xs">EN</span>
        <button aria-label="Show hidden icons" className="pr-[14px]">
          <Icon w={8} h={4}><path d="M0 4h8L4 0z" fill="#fff" /></Icon>
        </button>
        <span className="flex items-center gap-2">
          <Icon>
            <path d="M2 1v15" stroke="#fff" strokeWidth="1.400" />
            <path d="M3 2c3-1 4 1 9 0v7c-4 1-6-1-9 0z" fill="#fff" />
            <circle cx="11" cy="11" r="4.500" fill="#d42a2a" />
            <path d="M9 9l4 4M13 9l-4 4" stroke="#fff" strokeWidth="1.400" />
          </Icon>
          <Icon>
            <rect x="4.500" y="3.500" width="11" height="9" fill="#1d3f70" stroke="#fff" />
            <path d="M1.500 0v4h3V0M3 4v10h5" fill="none" stroke="#fff" />
            <path d="M10.500 6l5 9h-10z" fill="#ffd52e" stroke="#a87d00" strokeWidth=".6" />
            <path d="M10.500 9v3M10.500 13v1" stroke="#222" />
          </Icon>
          <Icon>
            <path d="M1 6h3l4-4v12l-4-4H1z" fill="#fff" />
            <path d="M10 5.500c1.500 1.500 1.500 3.500 0 5M12.500 3.500c3 2.500 3 6.500 0 9" fill="none" stroke="#fff" />
          </Icon>
        </span>
        <div className="w-[88px] whitespace-nowrap pl-1.5 text-center text-xs leading-4">
          <div dir="ltr">02:31 م</div>
          <div dir="ltr" className="font-['DejaVu_Sans',sans-serif]">٢٠١٨/٠٥/١٢</div>
        </div>
        <button aria-label="Show desktop" className="h-full w-[13px] rounded-xs border border-[#6d93bd] bg-linear-to-b from-[#3f6a9c] to-[#163a68]" />
      </div>
    </footer>
  );
}

export default function App() {
  return (
    <div className="min-h-screen bg-white">
      <div className="flex h-screen w-full max-w-[1280px] flex-col overflow-hidden font-['Noto_Sans',sans-serif] text-[11px] leading-4">
        <TitleBar />
        <Tabs />
        <Ribbon />
        <Workspace />
        <StatusBar />
        <Taskbar />
      </div>
    </div>
  );
}
